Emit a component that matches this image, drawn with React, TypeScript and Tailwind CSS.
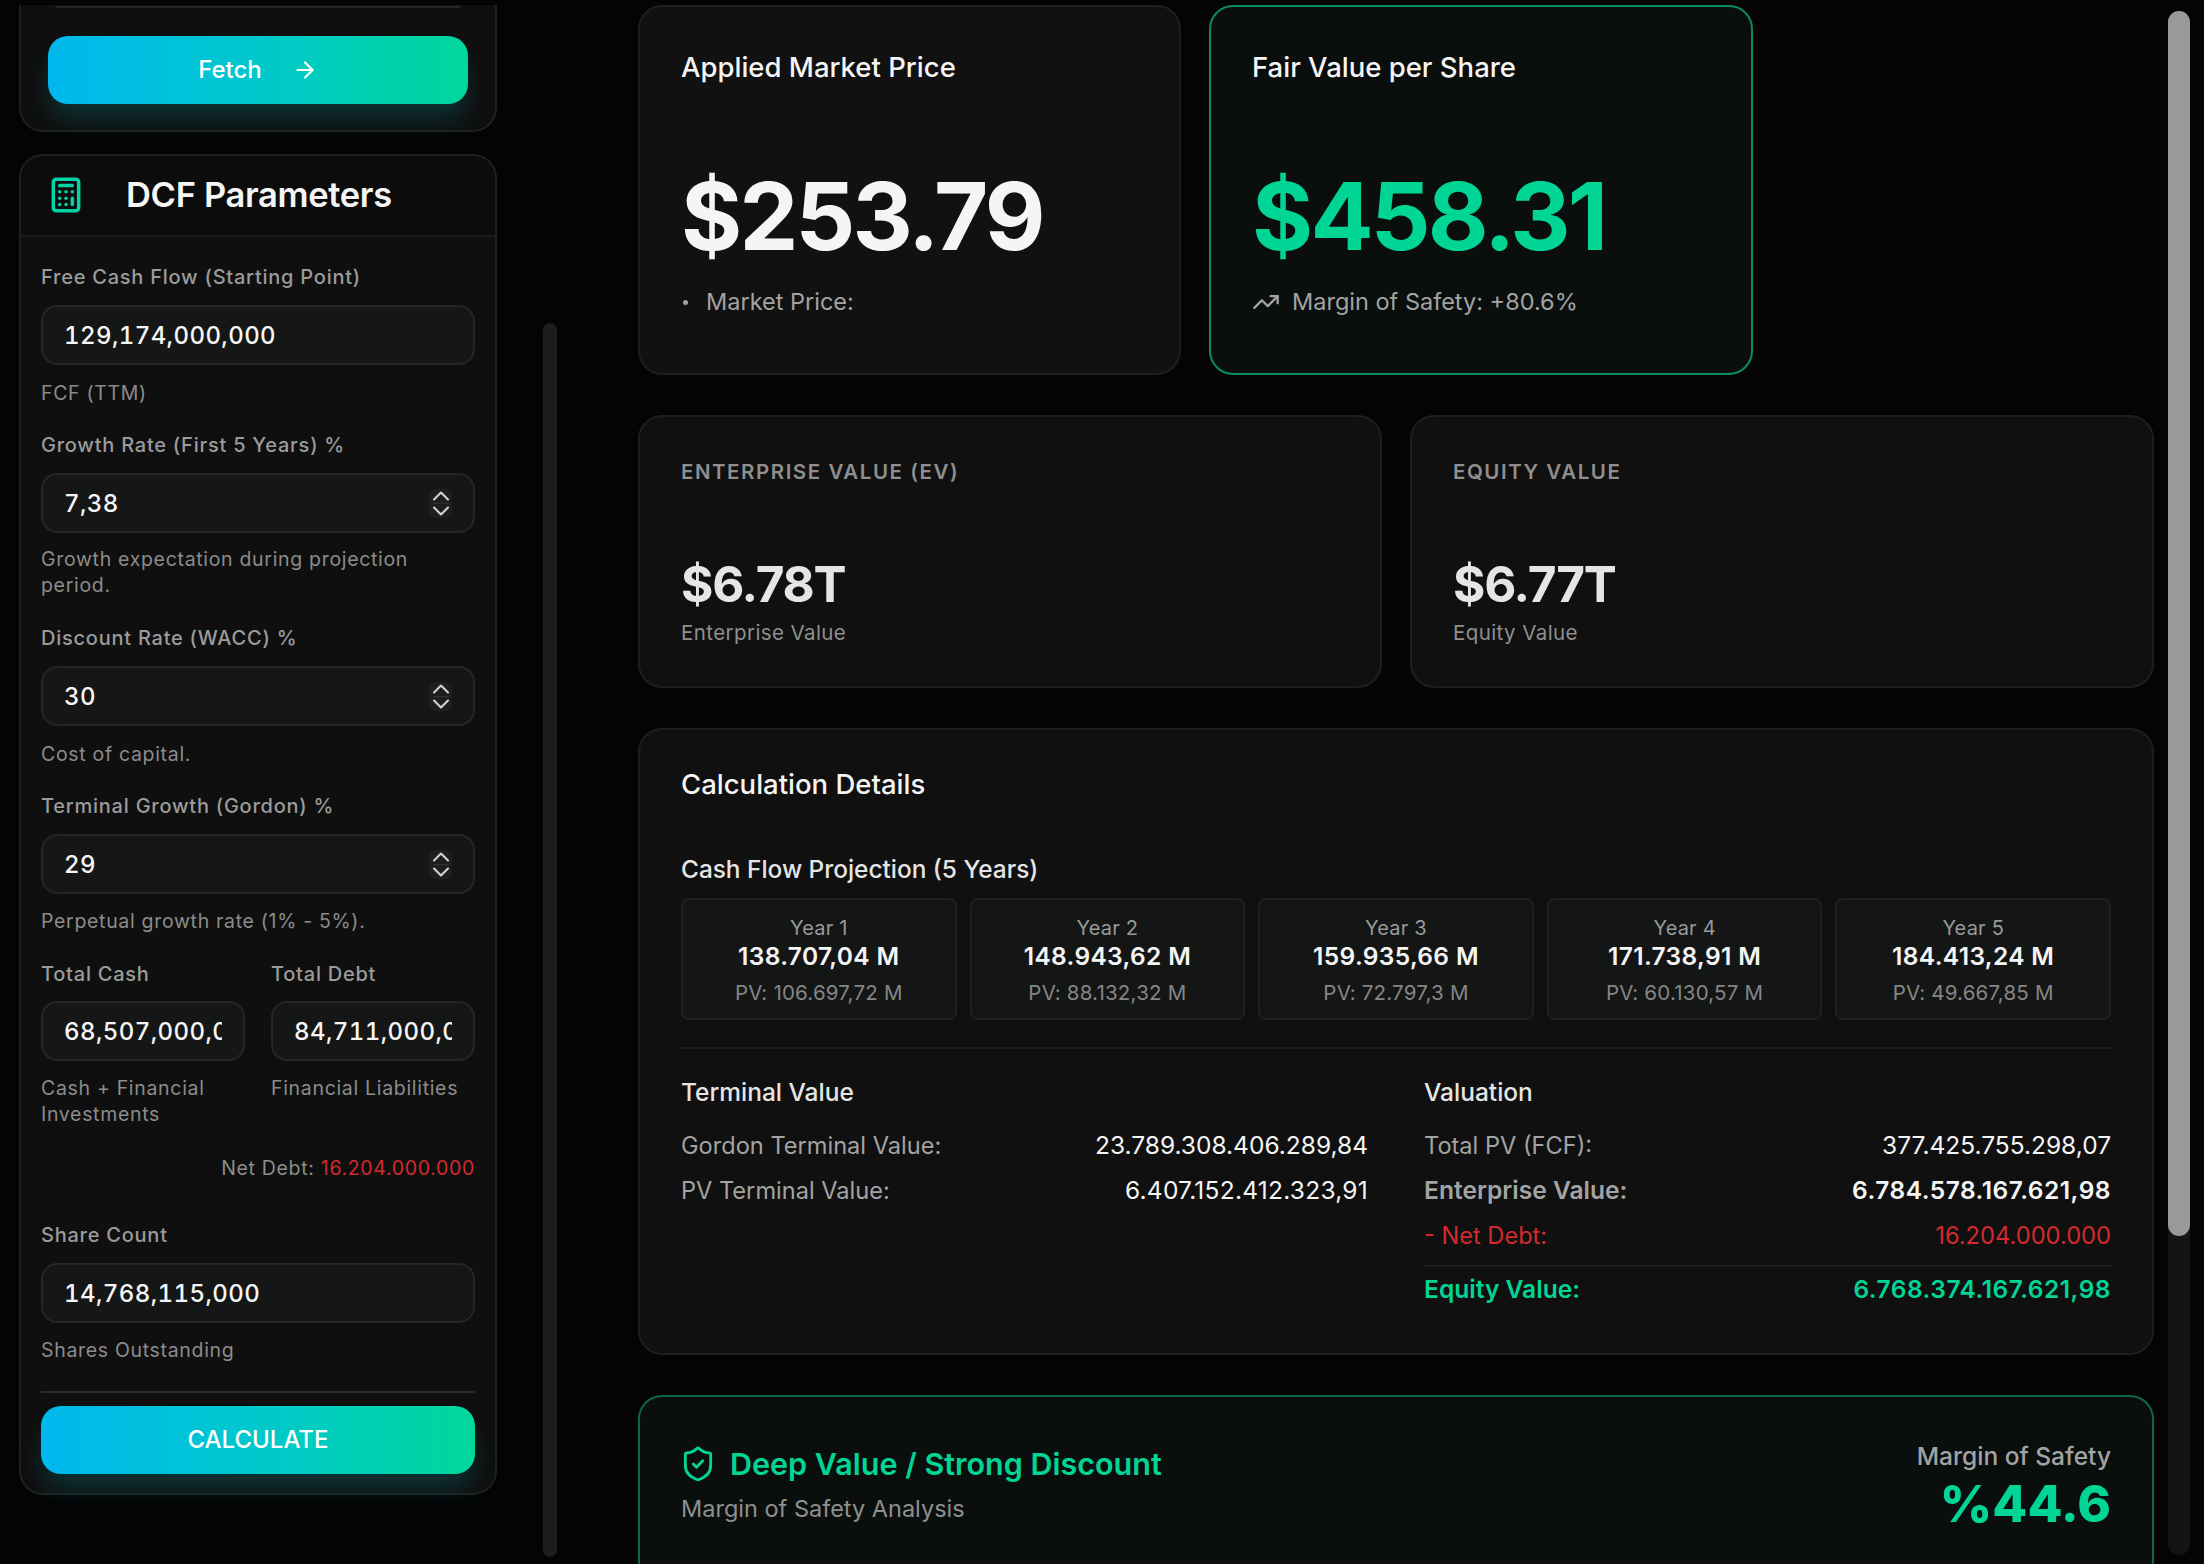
import { ArrowRight, Calculator, ChevronDown, ChevronUp, ShieldCheck, TrendingUp } from "lucide-react";

const years = [
  { year: "Year 1", cf: "138.707,04 M", pv: "PV: 106.697,72 M" },
  { year: "Year 2", cf: "148.943,62 M", pv: "PV: 88.132,32 M" },
  { year: "Year 3", cf: "159.935,66 M", pv: "PV: 72.797,3 M" },
  { year: "Year 4", cf: "171.738,91 M", pv: "PV: 60.130,57 M" },
  { year: "Year 5", cf: "184.413,24 M", pv: "PV: 49.667,85 M" },
];

function Label({ children }: { children: React.ReactNode }) {
  return <div className="h-[26px] text-[20px] leading-[26px] font-medium tracking-[0.038em] text-[#9b9b9b]">{children}</div>;
}

function Help({ children }: { children: React.ReactNode }) {
  return <div className="text-[19.5px] leading-[26px] tracking-[0.035em] text-[#8c8c8c]">{children}</div>;
}

function Field({ value, spin }: { value: string; spin?: boolean }) {
  return (
    <div className="flex h-[60px] items-center rounded-[16px] border-2 border-[#252626] bg-[#151717] pl-[21px] pr-[21px]">
      <div className="min-w-0 flex-1 overflow-hidden whitespace-nowrap pt-[2px] text-[24px] font-medium tracking-[0.017em] tabular-nums text-[#f5f5f5]">
        {value}
      </div>
      {spin && (
        <div className="flex h-[29px] w-[23px] flex-col items-center justify-center rounded-[6px] bg-[#1d1f1f] text-[#d4d4d4]">
          <ChevronUp size={28} strokeWidth={1.8} className="-mb-[7px] shrink-0" />
          <div className="h-px w-[16px] shrink-0 bg-[#2e3030]" />
          <ChevronDown size={28} strokeWidth={1.8} className="-mt-[7px] shrink-0" />
        </div>
      )}
    </div>
  );
}

function GradientButton({ children, className }: { children: React.ReactNode; className: string }) {
  return (
    <div className={`flex items-center justify-center bg-gradient-to-r from-[#00b8ee] via-[#00c8cc] to-[#00d79a] text-white shadow-[0_18px_26px_-4px_rgba(0,200,210,0.2)] ${className}`}>
      {children}
    </div>
  );
}

function Row({ label, value, labelClass, valueClass }: { label: string; value: string; labelClass: string; valueClass: string }) {
  return (
    <div className="flex h-[45px] items-center justify-between">
      <span className={labelClass}>{label}</span>
      <span className={valueClass}>{value}</span>
    </div>
  );
}

export default function App() {
  return (
    <div className="flex h-[1564px] w-[2204px] overflow-hidden bg-[#040404] font-['Inter',sans-serif]">
      {/* Sidebar */}
      <aside className="ml-[19px] flex w-[478px] shrink-0 flex-col pt-[5px]">
        <div className="h-[127px] rounded-b-[24px] border-2 border-t-0 border-[#1f1f1f] bg-[#0f0f0f] px-[27px]">
          <div className="mx-[7px] h-[3px] rounded-b-[12px] border-b-2 border-[#262626]" />
          <GradientButton className="mt-[28px] h-[68px] gap-[30px] rounded-[20px] text-[24px] font-medium">
            <span>Fetch</span>
            <ArrowRight size={26} strokeWidth={2} />
          </GradientButton>
        </div>

        <div className="mt-[22px] h-[1341px] rounded-[24px] border-2 border-[#1f1f1f] bg-[#0f0f0f]">
          <div className="flex h-[81px] items-center rounded-t-[22px] border-b-2 border-[#1c1c1c] bg-[#0c0c0c] pb-[2px] pl-[26px]">
            <Calculator size={38} strokeWidth={2.2} className="text-[#00d4a8]" />
            <h2 className="ml-[41px] text-[34.5px] font-semibold tracking-[-0.01em] text-[#f5f5f5]">DCF Parameters</h2>
          </div>

          <div className="px-[20px] pt-[27px]">
            <Label>Free Cash Flow (Starting Point)</Label>
            <div className="mt-[15px]"><Field value="129,174,000,000" /></div>
            <div className="mt-[15px]"><Help>FCF (TTM)</Help></div>

            <div className="mt-[26px]"><Label>Growth Rate (First 5 Years) %</Label></div>
            <div className="mt-[15px]"><Field value="7,38" spin /></div>
            <div className="mt-[13px]"><Help>Growth expectation during projection period.</Help></div>

            <div className="mt-[27px]"><Label>Discount Rate (WACC) %</Label></div>
            <div className="mt-[15px]"><Field value="30" spin /></div>
            <div className="mt-[15px]"><Help>Cost of capital.</Help></div>

            <div className="mt-[26px]"><Label>Terminal Growth (Gordon) %</Label></div>
            <div className="mt-[15px]"><Field value="29" spin /></div>
            <div className="mt-[14px]"><Help>Perpetual growth rate (1% - 5%).</Help></div>

            <div className="mt-[27px] grid grid-cols-2 gap-[26px]">
              <div>
                <Label>Total Cash</Label>
                <div className="mt-[14px]"><Field value="68,507,000,000" /></div>
                <div className="mt-[14px]"><Help>Cash + Financial Investments</Help></div>
              </div>
              <div>
                <Label>Total Debt</Label>
                <div className="mt-[14px]"><Field value="84,711,000,000" /></div>
                <div className="mt-[14px]"><Help>Financial Liabilities</Help></div>
              </div>
            </div>

            <div className="mt-[28px] text-right text-[19.5px] leading-[26px] tracking-[0.035em] text-[#8c8c8c]">
              Net Debt: <span className="text-[#d32a2e]">16.204.000.000</span>
            </div>

            <div className="mt-[41px]"><Label>Share Count</Label></div>
            <div className="mt-[15px]"><Field value="14,768,115,000" /></div>
            <div className="mt-[14px]"><Help>Shares Outstanding</Help></div>

            <div className="mt-[28px] h-[2px] bg-[#2a2a2a]" />
            <GradientButton className="mt-[13px] h-[68px] rounded-[20px] text-[24px] font-medium">CALCULATE</GradientButton>
          </div>
        </div>
      </aside>

      {/* Sidebar scrollbar */}
      <div className="ml-[46px] mt-[323px] h-[1234px] w-[14px] shrink-0 rounded-full bg-[#1c1d1d]" />

      {/* Main */}
      <main className="ml-[81px] flex w-[1516px] shrink-0 flex-col gap-[40px] pt-[5px]">
        <div className="grid shrink-0 grid-cols-[543px_544px] gap-[28px]">
          <div className="flex h-[370px] flex-col rounded-[24px] border-2 border-[#1e1e1e] bg-[#111111] px-[41px]">
            <h3 className="mt-[41px] text-[27.5px] leading-[38px] font-medium text-[#f5f5f5]">Applied Market Price</h3>
            <div className="mt-[75px] text-[93.5px] leading-[110px] font-bold tracking-[-0.03em] text-[#f5f5f5]">$253.79</div>
            <div className="mt-[14px] flex items-center text-[23.5px] leading-[34px] text-[#a3a3a3]">
              <span className="ml-[2px] h-[5px] w-[5px] rounded-full bg-[#a3a3a3]" />
              <span className="ml-[18px]">Market Price:</span>
            </div>
          </div>
          <div className="flex h-[370px] flex-col rounded-[24px] border-2 border-[#0b8a66] bg-[#0a0f0e] px-[41px]">
            <h3 className="mt-[41px] text-[27.5px] leading-[38px] font-medium text-[#f5f5f5]">Fair Value per Share</h3>
            <div className="mt-[75px] text-[93.5px] leading-[110px] font-bold tracking-[-0.03em] text-[#00d596]">$458.31</div>
            <div className="mt-[14px] flex items-center text-[23.5px] leading-[34px] text-[#a3a3a3]">
              <TrendingUp size={28} strokeWidth={2} />
              <span className="ml-[12px]">Margin of Safety: +80.6%</span>
            </div>
          </div>
        </div>

        <div className="grid shrink-0 grid-cols-2 gap-[28px]">
          {[
            ["ENTERPRISE VALUE (EV)", "$6.78T", "Enterprise Value"],
            ["EQUITY VALUE", "$6.77T", "Equity Value"],
          ].map(([title, value, sub]) => (
            <div key={title} className="h-[273px] rounded-[24px] border-2 border-[#1e1e1e] bg-[#101010] px-[41px]">
              <div className="mt-[41px] text-[20.5px] leading-[28px] font-semibold tracking-[0.075em] text-[#8f8f8f]">{title}</div>
              <div className="mt-[66px] text-[49.5px] leading-[64px] font-bold tracking-[-0.025em] text-[#e5e5e5]">{value}</div>
              <div className="mt-[2px] text-[20.5px] leading-[30px] tracking-[0.02em] text-[#8f8f8f]">{sub}</div>
            </div>
          ))}
        </div>

        <div className="h-[627px] shrink-0 rounded-[24px] border-2 border-[#1e1e1e] bg-[#101010] px-[41px]">
          <h3 className="mt-[35px] text-[27.5px] leading-[38px] font-medium text-[#f5f5f5]">Calculation Details</h3>
          <div className="mt-[49px] text-[24.4px] leading-[34px] font-medium text-[#e5e5e5]">Cash Flow Projection (5 Years)</div>
          <div className="mt-[12px] grid grid-cols-5 gap-[13px]">
            {years.map((y) => (
              <div key={y.year} className="flex h-[122px] flex-col items-center rounded-[8px] border-2 border-[#1f2121] bg-[#141616] pt-[15px]">
                <div className="text-[20px] leading-[26px] tracking-[0.01em] text-[#999999]">{y.year}</div>
                <div className="text-[24.5px] leading-[30px] font-semibold tracking-[0.014em] text-[#f5f5f5]">{y.cf}</div>
                <div className="mt-[7px] text-[20.5px] leading-[30px] tracking-[0.01em] text-[#858585]">{y.pv}</div>
              </div>
            ))}
          </div>
          <div className="mt-[27px] h-[2px] bg-[#1d1d1d]" />
          <div className="mt-[26px] grid grid-cols-2 gap-[56px]">
            <div>
              <div className="text-[24.5px] leading-[34px] font-medium text-[#e5e5e5]">Terminal Value</div>
              <div className="mt-[14px]">
                <Row label="Gordon Terminal Value:" value="23.789.308.406.289,84" labelClass="text-[23.6px] text-[#a3a3a3]" valueClass="text-[24.5px] text-[#f5f5f5]" />
                <Row label="PV Terminal Value:" value="6.407.152.412.323,91" labelClass="text-[23.6px] text-[#a3a3a3]" valueClass="text-[24.5px] tracking-[0.01em] text-[#f5f5f5]" />
              </div>
            </div>
            <div>
              <div className="text-[24.5px] leading-[34px] font-medium text-[#e5e5e5]">Valuation</div>
              <div className="mt-[14px]">
                <Row label="Total PV (FCF):" value="377.425.755.298,07" labelClass="text-[23.6px] text-[#a3a3a3]" valueClass="text-[24.5px] text-[#f5f5f5]" />
                <Row label="Enterprise Value:" value="6.784.578.167.621,98" labelClass="text-[24.6px] font-semibold text-[#a3a3a3]" valueClass="text-[24.5px] font-semibold tracking-[0.02em] text-[#f5f5f5]" />
                <Row label="- Net Debt:" value="16.204.000.000" labelClass="text-[23.6px] text-[#d32a2e]" valueClass="text-[23.7px] text-[#d32a2e]" />
                <div className="mt-[7px] h-[2px] bg-[#1f1f1f]" />
                <Row label="Equity Value:" value="6.768.374.167.621,98" labelClass="text-[24.6px] font-semibold text-[#00d596]" valueClass="text-[24.5px] font-semibold tracking-[0.02em] text-[#00d596]" />
              </div>
            </div>
          </div>
        </div>

        <div className="flex h-[200px] shrink-0 items-start justify-between rounded-t-[24px] border-2 border-b-0 border-[#0d6650] bg-[#0a0f0e] px-[41px] pt-[47px]">
          <div>
            <div className="flex items-center">
              <ShieldCheck size={38} strokeWidth={1.8} className="-ml-[2px] text-[#00d596]" />
              <span className="ml-[13px] text-[30.5px] leading-[40px] font-semibold text-[#00d596]">Deep Value / Strong Discount</span>
            </div>
            <div className="mt-[8px] text-[23.5px] leading-[34px] text-[#8f8f8f]">Margin of Safety Analysis</div>
          </div>
          <div className="-mt-[5px] text-right">
            <div className="text-[24.5px] leading-[34px] font-medium text-[#a3a3a3]">Margin of Safety</div>
            <div className="text-[51px] leading-[62px] font-extrabold text-[#00d596]">%44.6</div>
          </div>
        </div>
      </main>

      {/* Page scrollbar */}
      <div className="ml-[14px] mt-[11px] h-[1544px] w-[22px] shrink-0 rounded-full bg-[#141414]">
        <div className="h-[1225px] w-full rounded-full bg-[#989a98]" />
      </div>
    </div>
  );
}
